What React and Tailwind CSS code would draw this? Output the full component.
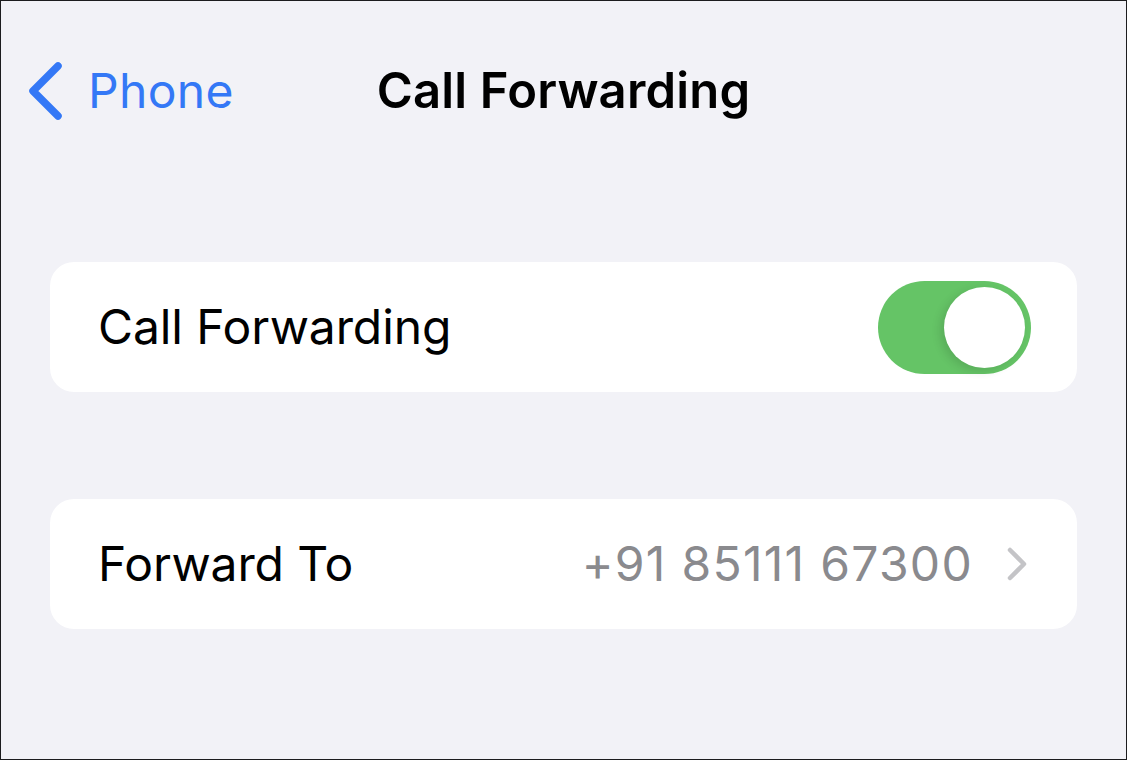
import React, { useState } from 'react';

const ChevronLeft = () => (
  <svg width="38" height="60" viewBox="0 0 38 60" fill="none">
    <path d="M32 5 L7 30 L32 55" stroke="#3478f6" strokeWidth="7.5" strokeLinecap="round" strokeLinejoin="round" />
  </svg>
);

const ChevronRight = () => (
  <svg width="24" height="36" viewBox="0 0 24 36" fill="none">
    <path d="M5 4 L19 18 L5 32" stroke="#c4c4c7" strokeWidth="4.5" strokeLinecap="round" strokeLinejoin="round" />
  </svg>
);

const Toggle = ({ on, onChange }) => (
  <button
    onClick={() => onChange(!on)}
    className={`flex items-center w-[153px] h-[93px] rounded-full p-[6px] ${on ? 'bg-[#65c466] justify-end' : 'bg-[#e9e9eb] justify-start'}`}
  >
    <span className="block w-[81px] h-[81px] rounded-full bg-white shadow-[-4px_3px_10px_rgba(0,0,0,0.12)]" />
  </button>
);

const App = () => {
  const [forwarding, setForwarding] = useState(true);

  return (
    <div
      className="w-[1127px] h-[760px] bg-[#f2f2f7] border border-[#1c1c1e] overflow-hidden"
      style={{ fontFamily: 'Inter, "Noto Sans", sans-serif' }}
    >
      {/* nav bar */}
      <div className="grid grid-cols-[1fr_auto_1fr] items-center h-[180px]">
        <div className="flex items-center pl-[25px] gap-[24px] text-[#3478f6]">
          <ChevronLeft />
          <span className="text-[48px] tracking-[0.3px]">Phone</span>
        </div>
        <div className="text-[49px] font-semibold text-black tracking-[0.2px]">Call Forwarding</div>
        <div />
      </div>

      <div className="flex flex-col gap-[107px] px-[49px] pt-[81px]">
        <div className="flex items-center justify-between h-[130px] bg-white rounded-[24px] pl-[48px] pr-[46px]">
          <span className="text-[48px] text-black tracking-[-0.1px]">Call Forwarding</span>
          <Toggle on={forwarding} onChange={setForwarding} />
        </div>

        <div className="flex items-center justify-between h-[130px] bg-white rounded-[24px] pl-[48px] pr-[48px]">
          <span className="text-[48px] text-black tracking-[-0.1px]">Forward To</span>
          <div className="flex items-center gap-[32px]">
            <span className="text-[48px] text-[#8a8a8e] tracking-[1.3px]">+91 85111 67300</span>
            <ChevronRight />
          </div>
        </div>
      </div>
    </div>
  );
};

export default App;
